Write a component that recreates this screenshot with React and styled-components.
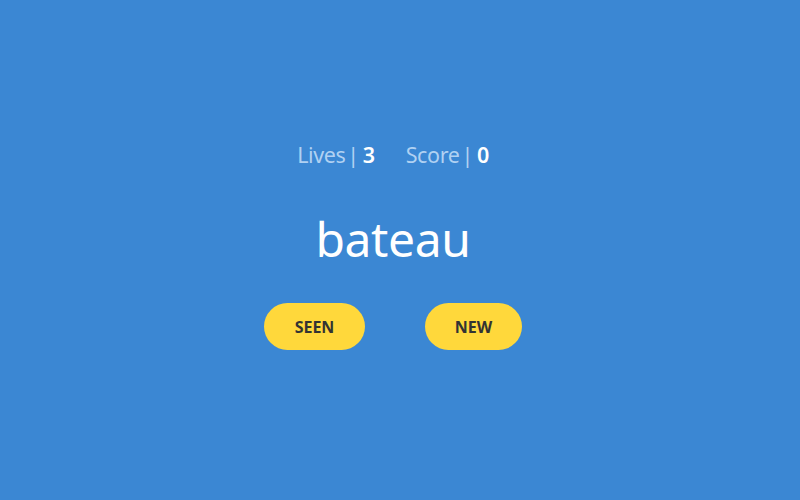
import React from "react";
import styled, { createGlobalStyle } from "styled-components";

const Global = createGlobalStyle`
  html, body { margin: 0; padding: 0; }
  body { background: #3b87d3; font-family: "Noto Sans", "Open Sans", sans-serif; }
`;

const Page = styled.div`
  height: 500px;
  display: flex;
  flex-direction: column;
  align-items: center;
  justify-content: center;
  padding-right: 14px;
  padding-bottom: 8px;
  box-sizing: border-box;
`;

const Stats = styled.div`
  display: flex;
  gap: 31px;
  font-size: 21.5px;
  line-height: 26px;
`;

const Stat = styled.div`
  color: #b0d1f2;
  letter-spacing: -0.4px;
`;

const Sep = styled.span`
  margin: 0 4px 0 2px;
`;

const Value = styled.span`
  color: #ffffff;
  font-weight: 600;
`;

const Word = styled.div`
  color: #ffffff;
  font-size: 48px;
  line-height: 60px;
  margin-top: 41px;
  letter-spacing: -0.4px;
`;

const Buttons = styled.div`
  display: flex;
  gap: 60px;
  margin-top: 34px;
`;

const Button = styled.button`
  width: ${(p) => p.$w}px;
  height: 47px;
  border: none;
  border-radius: 24px;
  background: #ffd83b;
  color: #333333;
  font-family: "Noto Sans", "Open Sans", sans-serif;
  font-weight: 700;
  font-size: 16px;
  letter-spacing: 0;
  padding: 0;
  cursor: pointer;
`;

export default function App() {
  return (
    <>
      <Global />
      <Page>
        <Stats>
          <Stat>
            Lives<Sep>|</Sep><Value>3</Value>
          </Stat>
          <Stat>
            Score<Sep>|</Sep><Value>0</Value>
          </Stat>
        </Stats>
        <Word>bateau</Word>
        <Buttons>
          <Button $w={101}>SEEN</Button>
          <Button $w={97}>NEW</Button>
        </Buttons>
      </Page>
    </>
  );
}
